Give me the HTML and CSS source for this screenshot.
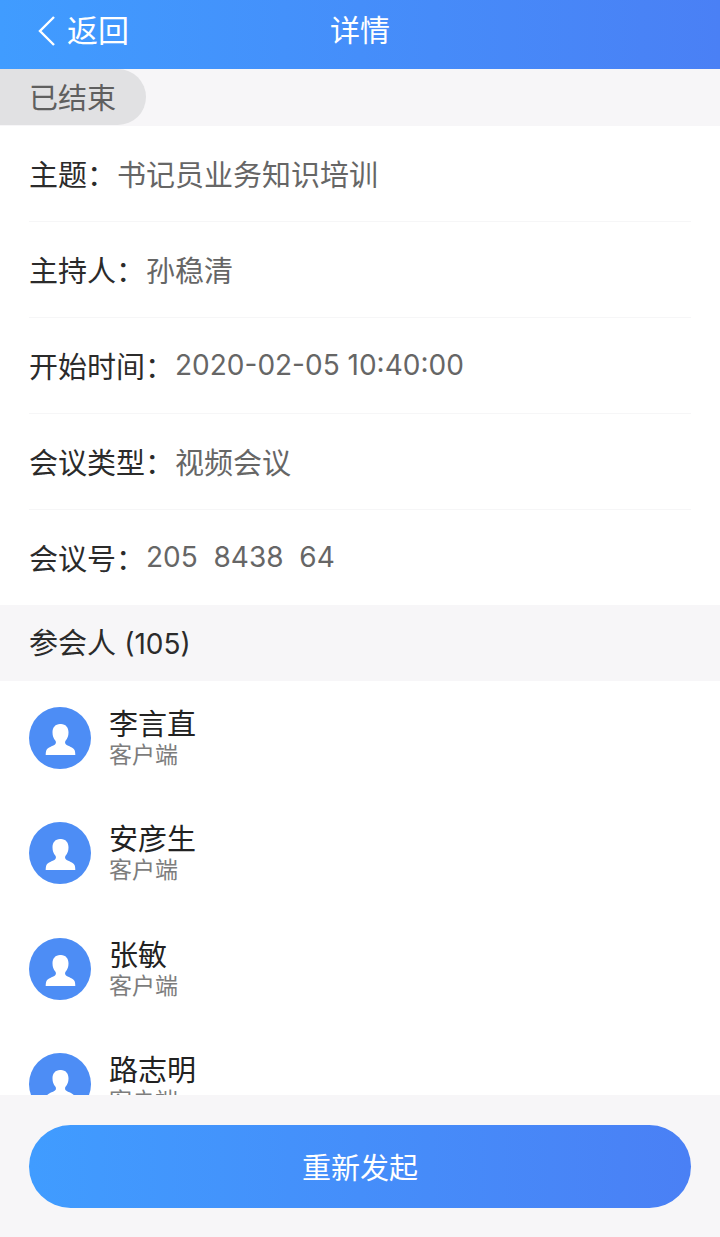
FILE: index.html
```html
<!DOCTYPE html>
<html lang="zh-CN">
<head>
  <meta charset="UTF-8">
  <meta name="viewport" content="width=device-width, initial-scale=1.0">
  <title>详情</title>
  <link rel="stylesheet" href="styles.css">
</head>
<body>
  <header class="topbar">
    <a class="back" href="#">
      <svg class="back-icon" viewBox="0 0 20 30" width="20" height="30"><path d="M18 1 L4 15 L18 29" fill="none" stroke="#fff" stroke-width="2.4"/></svg>
      <span>返回</span>
    </a>
    <h1 class="title">详情</h1>
  </header>

  <div class="status-band">
    <span class="status">已结束</span>
  </div>

  <section class="info">
    <div class="row"><span class="label">主题：</span><span class="value">书记员业务知识培训</span></div>
    <div class="row"><span class="label">主持人：</span><span class="value">孙稳清</span></div>
    <div class="row"><span class="label">开始时间：</span><span class="value value-num">2020-02-05 10:40:00</span></div>
    <div class="row"><span class="label">会议类型：</span><span class="value">视频会议</span></div>
    <div class="row row-last"><span class="label">会议号：</span><span class="value value-num">205&nbsp; 8438&nbsp; 64</span></div>
  </section>

  <div class="section-title">参会人 <span class="count">(105)</span></div>

  <section class="people">
    <div class="person">
      <svg class="avatar" viewBox="0 0 62 62"><use href="#avatar-shape"/></svg>
      <div class="person-text"><div class="name">李言直</div><div class="client">客户端</div></div>
    </div>
    <div class="person">
      <svg class="avatar" viewBox="0 0 62 62"><use href="#avatar-shape"/></svg>
      <div class="person-text"><div class="name">安彦生</div><div class="client">客户端</div></div>
    </div>
    <div class="person">
      <svg class="avatar" viewBox="0 0 62 62"><use href="#avatar-shape"/></svg>
      <div class="person-text"><div class="name">张敏</div><div class="client">客户端</div></div>
    </div>
    <div class="person">
      <svg class="avatar" viewBox="0 0 62 62"><use href="#avatar-shape"/></svg>
      <div class="person-text"><div class="name">路志明</div><div class="client">客户端</div></div>
    </div>
  </section>

  <footer class="bottom">
    <button class="restart">重新发起</button>
  </footer>

  <svg class="defs" width="0" height="0">
    <defs>
      <g id="avatar-shape">
        <circle cx="31" cy="31" r="31" fill="#4d8df5"/>
        <path d="M31 17c-4.600 0-7.500 3.500-7.500 8.500 0 3.400 1.100 6 2.800 8 .9 1.100.9 3-.3 4-2.700 2-7 2.500-8.500 5.500-.6 1.200-.8 3.300-.8 5h29.600c0-1.700-.2-3.800-.8-5-1.500-3-5.800-3.500-8.500-5.500-1.200-1-1.200-2.900-.3-4 1.700-2 2.800-4.600 2.800-8 0-5-2.900-8.500-7.500-8.500z" fill="#fff"/>
      </g>
    </defs>
  </svg>
</body>
</html>
```

FILE: styles.css
```css
* {
  box-sizing: border-box;
}
html, body {
  height: 100%;
}
body {
  margin: 0;
  height: 1237px;
  display: flex;
  flex-direction: column;
  overflow: hidden;
  background-color: #fff;
  color: #2b2b2b;
  font-family: Inter, "Noto Sans CJK SC", sans-serif;
  font-size: 29px;
}
.topbar {
  height: 69px;
  flex: none;
  display: flex;
  align-items: center;
  justify-content: center;
  position: relative;
  background: linear-gradient(90deg, #409cff, #4a80f5);
  color: #fff;
}
.back {
  position: absolute;
  left: 36px;
  top: 0;
  height: 57px;
  display: flex;
  align-items: center;
  gap: 11px;
  color: #fff;
  text-decoration: none;
  font-size: 31px;
}
.back-icon {
  display: block;
  margin-top: 5px;
}
.title {
  margin: 0 0 13px;
  font-size: 30px;
  font-weight: 400;
}
.status-band {
  height: 57px;
  flex: none;
  background-color: #f7f6f8;
  display: flex;
}
.status {
  width: 146px;
  height: 56px;
  padding-left: 29px;
  line-height: 59px;
  background-color: #e1e1e3;
  border-radius: 0 28px 28px 0;
  color: #5f5f5f;
}
.info {
  flex: none;
}
.row {
  height: 96px;
  margin: 0 29px;
  display: flex;
  align-items: center;
  padding-bottom: 2px;
  border-bottom: 1px solid #f6f6f7;
}
.row-last {
  height: 95px;
  border-bottom: 0;
}
.label {
  color: #2b2b2b;
}
.value {
  margin-left: 1px;
  color: #666;
}
.value-num {
  font-size: 28px;
}
.section-title {
  height: 76px;
  flex: none;
  padding-left: 29px;
  line-height: 78px;
  background-color: #f7f6f8;
}
.count {
  font-size: 28px;
}
.people {
  flex: 1;
  overflow: hidden;
}
.person {
  height: 115.33px;
  padding: 26px 0 0 29px;
  display: flex;
  gap: 18px;
}
.avatar {
  width: 62px;
  height: 62px;
  flex: none;
}
.person-text {
  margin-top: 1px;
}
.name {
  line-height: 34px;
  color: #222;
}
.client {
  font-size: 23px;
  line-height: 27px;
  color: #7d7d7d;
}
.bottom {
  height: 142px;
  flex: none;
  padding: 30px 29px 0;
  background-color: #f7f6f8;
}
.restart {
  width: 100%;
  height: 83px;
  padding-bottom: 3px;
  border: 0;
  border-radius: 42px;
  background: linear-gradient(90deg, #409cff, #4a80f5);
  color: #fff;
  font-family: inherit;
  font-size: 29px;
}
.defs {
  position: absolute;
}
```
